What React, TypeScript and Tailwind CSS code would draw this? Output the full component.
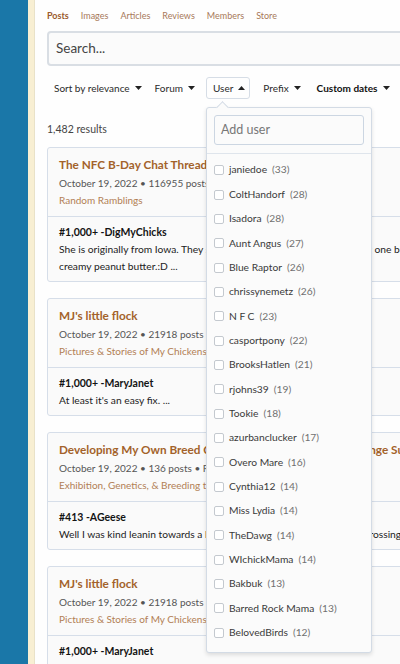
import { ReactNode } from 'react'

const users: [string, number][] = [
    ['janiedoe', 33],
    ['ColtHandorf', 28],
    ['Isadora', 28],
    ['Aunt Angus', 27],
    ['Blue Raptor', 26],
    ['chrissynemetz', 26],
    ['N F C', 23],
    ['casportpony', 22],
    ['BrooksHatlen', 21],
    ['rjohns39', 19],
    ['Tookie', 18],
    ['azurbanclucker', 17],
    ['Overo Mare', 16],
    ['Cynthia12', 14],
    ['Miss Lydia', 14],
    ['TheDawg', 14],
    ['WIchickMama', 14],
    ['Bakbuk', 13],
    ['Barred Rock Mama', 13],
    ['BelovedBirds', 12],
]

type Result = {
    title: string
    posts: string
    rest: string
    forum: string
    snippetHead: string
    snippet: ReactNode
}

const results: Result[] = [
    {
        title: 'The NFC B-Day Chat Thread',
        posts: '116955',
        rest: 'Replies: 1,000+',
        forum: 'Random Ramblings',
        snippetHead: '#1,000+ -DigMyChicks',
        snippet: (
            <>
                She is originally from Iowa. They say she is really very good at bringing one big batch of
                <br />
                creamy peanut butter.:D ...
            </>
        ),
    },
    {
        title: "MJ's little flock",
        posts: '21918',
        rest: 'Replies: 1,000+',
        forum: 'Pictures & Stories of My Chickens',
        snippetHead: '#1,000+ -MaryJanet',
        snippet: <>At least it's an easy fix. ...</>,
    },
    {
        title: 'Developing My Own Breed Colors - The Color Match Challenge Sussex',
        posts: '136',
        rest: 'Replies: 413',
        forum: 'Exhibition, Genetics, & Breeding to the Standard',
        snippetHead: '#413 -AGeese',
        snippet: <>Well I was kind leanin towards a large fowl barred type bird through crossing</>,
    },
    {
        title: "MJ's little flock",
        posts: '21918',
        rest: 'Replies: 1,000+',
        forum: 'Pictures & Stories of My Chickens',
        snippetHead: '#1,000+ -MaryJanet',
        snippet: <>At least it's an easy fix. ...</>,
    },
]

function Caret({ up = false }: { up?: boolean }) {
    return (
        <svg width="7" height="4" viewBox="0 0 7 4" className="ml-[5px] inline-block">
            <path d={up ? 'M0 4 L3.5 0 L7 4 Z' : 'M0 0 L7 0 L3.5 4 Z'} fill="#222" />
        </svg>
    )
}

function ResultCard({ r }: { r: Result }) {
    return (
        <div className="w-[440px] border border-[#d6dee9] rounded-[3px] bg-[#fafafa] mb-[16px]">
            <div className="px-[11px] pt-[7px] pb-[7px] border-b border-[#d6dee9]">
                <div className="text-[11.75px] font-bold text-[#a3622a] leading-[19px] whitespace-nowrap">{r.title}</div>
                <div className="text-[10px] text-[#555] leading-[18px] whitespace-nowrap">
                    October 19, 2022 • {r.posts} posts • {r.rest}
                </div>
                <div className="text-[10px] text-[#b27f55] leading-[17px] whitespace-nowrap">{r.forum}</div>
            </div>
            <div className="px-[11px] pt-[7px] pb-[6px]">
                <div className="text-[10.5px] font-bold text-[#141414] leading-[17px] whitespace-nowrap">{r.snippetHead}</div>
                <div className="text-[10.25px] text-[#222] leading-[17px] whitespace-nowrap">{r.snippet}</div>
            </div>
        </div>
    )
}

function UserMenu() {
    return (
        <div className="absolute left-0 top-[30px] w-[166px] bg-[#fbfbfb] border border-[#d3dbe5] rounded-[3px] shadow-[0_2px_4px_rgba(0,0,0,0.12)] z-10">
            <div className="absolute -top-[5px] left-[11px] w-[9px] h-[9px] rotate-45 bg-[#fbfbfb] border-l border-t border-[#d3dbe5]" />
            <div className="px-[7px] pt-[7px] pb-[8px] border-b border-[#dfe5ec]">
                <div className="h-[30px] border border-[#ccd6e2] rounded-[3px] bg-[#fbfbfb] flex items-center px-[6px] text-[12.5px] text-[#777]">
                    Add user
                </div>
            </div>
            <div className="pt-[4px] pb-[7px]">
                {users.map(([name, n]) => (
                    <div key={name} className="h-[24.35px] flex items-center px-[7px] text-[10.25px] whitespace-nowrap">
                        <span className="w-[10px] h-[10px] border border-[#c4c9cf] rounded-[2px] bg-white mr-[5px]" />
                        <span className="text-[#3a3a3a]">{name}</span>
                        <span className="text-[#707070] ml-[5px]">({n})</span>
                    </div>
                ))}
            </div>
        </div>
    )
}

export default function App() {
    return (
        <div className="w-[400px] h-[664px] overflow-hidden flex bg-[#fefefe]" style={{ fontFamily: 'Lato, "Open Sans", sans-serif' }}>
            <div className="w-[28px] shrink-0 bg-[#1a77a8]" />
            <div className="w-[7px] shrink-0 bg-[#f8efd3] border-r border-[#e9e2c9]" />
            <div className="flex-1 min-w-0 pl-[12px] relative">
                {/* tabs */}
                <div className="flex gap-[12px] text-[9px] h-[31px] items-center whitespace-nowrap">
                    <span className="font-bold text-[#9b5a2c]">Posts</span>
                    <span className="text-[#a8795a]">Images</span>
                    <span className="text-[#a8795a]">Articles</span>
                    <span className="text-[#a8795a]">Reviews</span>
                    <span className="text-[#a8795a]">Members</span>
                    <span className="text-[#a8795a]">Store</span>
                </div>

                {/* search */}
                <div className="w-[420px] h-[35px] border-2 border-[#d9dee4] rounded-[4px] bg-[#fbfbfb] flex items-center px-[7px] text-[13.5px] text-[#444]">
                    Search...
                </div>

                {/* filters */}
                <div className="flex items-center h-[44px] text-[10px] text-[#2a2a2a] whitespace-nowrap">
                    <span className="ml-[7px] flex items-center">Sort by relevance<Caret /></span>
                    <span className="ml-[13px] flex items-center">Forum<Caret /></span>
                    <div className="relative ml-[11px]">
                        <span className="h-[22px] pl-[6px] pr-[4px] border border-[#d6dde6] rounded-[3px] flex items-center">User<Caret up /></span>
                        <UserMenu />
                    </div>
                    <span className="ml-[13px] flex items-center">Prefix<Caret /></span>
                    <span className="ml-[16px] flex items-center font-bold text-[#111]">Custom dates<Caret /></span>
                </div>

                <div className="text-[10.5px] text-[#444] h-[37px] pt-[2px] flex items-center">1,482 results</div>

                <div>
                    {results.map((r, i) => (
                        <ResultCard key={i} r={r} />
                    ))}
                </div>
            </div>
        </div>
    )
}
